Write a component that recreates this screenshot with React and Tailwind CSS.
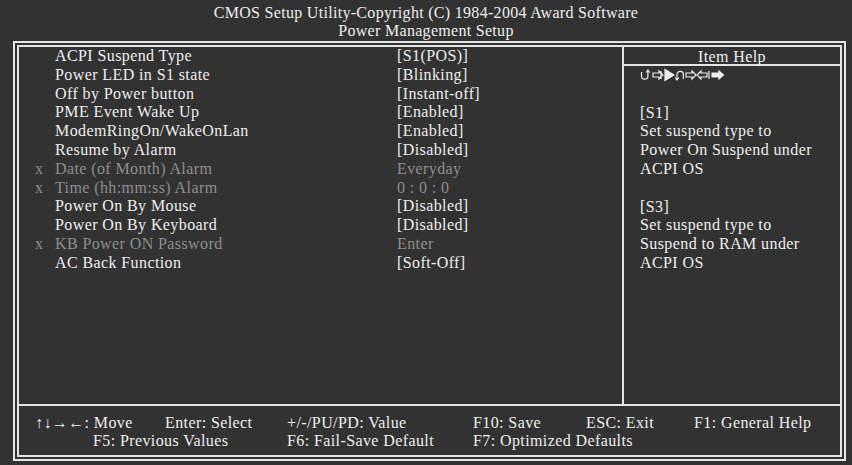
import React from 'react';

const rows = [
  { label: 'ACPI Suspend Type', value: '[S1(POS)]' },
  { label: 'Power LED in S1 state', value: '[Blinking]' },
  { label: 'Off by Power button', value: '[Instant-off]' },
  { label: 'PME Event Wake Up', value: '[Enabled]' },
  { label: 'ModemRingOn/WakeOnLan', value: '[Enabled]' },
  { label: 'Resume by Alarm', value: '[Disabled]' },
  { label: 'Date (of Month) Alarm', value: 'Everyday', off: true },
  { label: 'Time (hh:mm:ss) Alarm', value: '0 : 0 : 0', off: true },
  { label: 'Power On By Mouse', value: '[Disabled]' },
  { label: 'Power On By Keyboard', value: '[Disabled]' },
  { label: 'KB Power ON Password', value: 'Enter', off: true },
  { label: 'AC Back Function', value: '[Soft-Off]' },
];

const help = [
  '',
  '[S1]',
  'Set suspend type to',
  'Power On Suspend under',
  'ACPI OS',
  '',
  '[S3]',
  'Set suspend type to',
  'Suspend to RAM under',
  'ACPI OS',
];

function KeyGlyphs() {
  // the garbled arrow glyphs under "Item Help"
  return (
    <svg width="88" height="14" viewBox="0 0 88 14" fill="none" stroke="#eeeeee" strokeWidth="1.2" aria-hidden="true">
      <path d="M1.5 4v4a3.2 3.2 0 0 0 6.4 0V2.5" />
      <path d="M6.1 4.5l1.8-2.5 1.8 2.5" />
      <path d="M13 5h6V3l4 4-4 4V9h-6z" />
      <path d="M21 3v8" />
      <path d="M25 1.5l9 5.5-9 5.5z" fill="#eeeeee" />
      <path d="M37 12V6.5a3.2 3.2 0 0 1 6.4 0V11" />
      <path d="M35.2 9.5l1.8 2.5 1.8-2.5" />
      <path d="M46 5h6V3l4 4-4 4V9h-6z" />
      <path d="M67 5h-6V3l-4 4 4 4V9h6z" />
      <path d="M72 5h7V3l4.5 4-4.5 4V9h-7z" fill="#eeeeee" />
      <path d="M69 3v8" />
    </svg>
  );
}

export default function App() {
  return (
    <div
      className="w-[852px] h-[465px] bg-[#323232] text-[#eeeeee] overflow-hidden"
      style={{ fontFamily: '"Liberation Serif", "Times New Roman", serif' }}
    >
      <div className="pt-[4px] text-center text-[16px] leading-[18px] tracking-[0.3px]">
        <div>CMOS Setup Utility-Copyright (C) 1984-2004 Award Software</div>
        <div>Power Management Setup</div>
      </div>

      <div className="mt-[1px] ml-[13px] w-[833px] h-[420px] border-2 border-[#e4e4e4] p-[2px]">
        <div className="h-full border-2 border-[#e4e4e4] flex flex-col text-[16px] tracking-[0.4px]">
          <div className="h-[359px] flex border-b-2 border-[#e4e4e4]">
            <div className="w-[605px] border-r-2 border-[#e4e4e4] leading-[18.8px]">
              {rows.map((r) => (
                <div key={r.label} className={`grid grid-cols-[36px_342px_1fr] ${r.off ? 'text-[#8e8e8e]' : ''}`}>
                  <span className="pl-[16px]">{r.off ? 'x' : ''}</span>
                  <span>{r.label}</span>
                  <span>{r.value}</span>
                </div>
              ))}
            </div>
            <div className="flex-1 flex flex-col">
              <div className="h-[19px] border-b-2 border-[#e4e4e4] text-center leading-[19px]">Item Help</div>
              <div className="pl-[16px] leading-[18.8px]">
                <div className="h-[18.8px] flex items-center">
                  <KeyGlyphs />
                </div>
                {help.map((h, i) => (
                  <div key={i} className="h-[18.8px]">{h}</div>
                ))}
              </div>
            </div>
          </div>

          <div className="flex-1 pt-[8px] leading-[18px]">
            <div className="flex pl-[16px]">
              <span className="w-[130px]">↑↓→←: Move</span>
              <span className="w-[122px]">Enter: Select</span>
              <span className="w-[186px]">+/-/PU/PD: Value</span>
              <span className="w-[113px]">F10: Save</span>
              <span className="w-[108px]">ESC: Exit</span>
              <span>F1: General Help</span>
            </div>
            <div className="flex pl-[74px]">
              <span className="w-[194px]">F5: Previous Values</span>
              <span className="w-[186px]">F6: Fail-Save Default</span>
              <span>F7: Optimized Defaults</span>
            </div>
          </div>
        </div>
      </div>
    </div>
  );
}
